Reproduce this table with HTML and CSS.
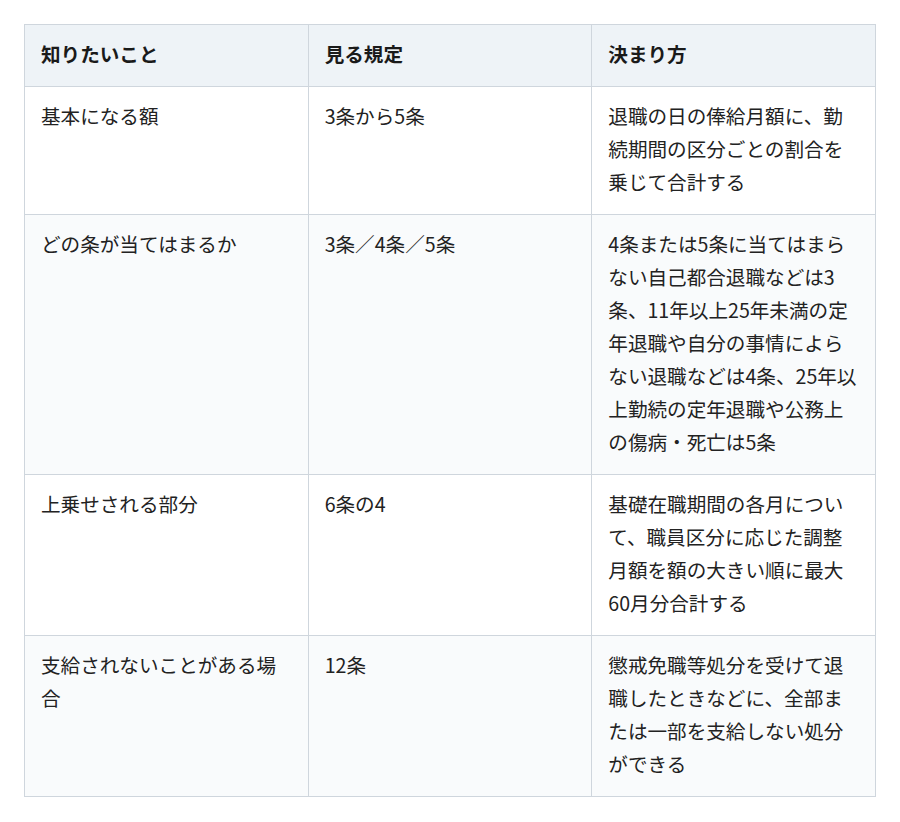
FILE: index.html
```html
<!DOCTYPE html>
<html lang="ja">
<head>
<meta charset="utf-8">
<link rel="stylesheet" href="styles.css">
</head>
<body>
<table class="rules">
  <thead>
    <tr><th>知りたいこと</th><th>見る規定</th><th>決まり方</th></tr>
  </thead>
  <tbody>
    <tr><td>基本になる額</td><td>3条から5条</td><td>退職の日の俸給月額に、勤続期間の区分ごとの割合を乗じて合計する</td></tr>
    <tr><td>どの条が当てはまるか</td><td>3条／4条／5条</td><td>4条または5条に当てはまらない自己都合退職などは3条、11年以上25年未満の定年退職や自分の事情によらない退職などは4条、25年以上勤続の定年退職や公務上の傷病・死亡は5条</td></tr>
    <tr><td>上乗せされる部分</td><td>6条の4</td><td>基礎在職期間の各月について、職員区分に応じた調整月額を額の大きい順に最大60月分合計する</td></tr>
    <tr><td>支給されないことがある場合</td><td>12条</td><td>懲戒免職等処分を受けて退職したときなどに、全部または一部を支給しない処分ができる</td></tr>
  </tbody>
</table>
</body>
</html>
```
FILE: styles.css
```css
html, body { margin: 0; padding: 0; background: #ffffff; }
body {
  padding: 24px;
  font-family: "Noto Sans CJK JP", "Noto Sans", sans-serif;
  color: #222222;
}
.rules {
  width: 852px;
  border-collapse: collapse;
  table-layout: fixed;
  font-size: 19.6px;
  line-height: 33px;
}
.rules th, .rules td {
  border: 1px solid #cfd6dd;
  padding: 12px 16px 16px;
  text-align: left;
  vertical-align: top;
}
.rules th {
  background: #eef3f7;
  font-weight: 700;
  color: #1a1a1a;
}
.rules tbody tr:nth-child(even) td { background: #f9fbfc; }
```
